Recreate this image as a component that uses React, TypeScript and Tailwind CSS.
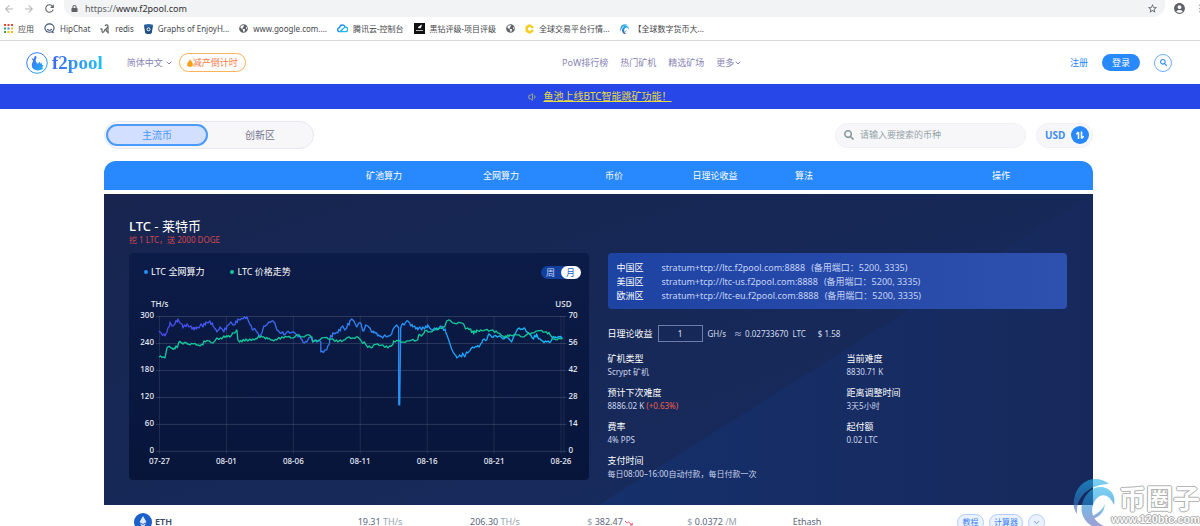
import React from 'react';
import { ChevronDown, Volume1 } from 'lucide-react';
import { FaGlobeAmericas, FaLock, FaSearch } from 'react-icons/fa';
import { MdAccountCircle, MdArrowBack, MdArrowForward, MdMoreVert, MdRefresh, MdStarBorder } from 'react-icons/md';

const APP_COLORS = ['#ea4335', '#ea4335', '#ea4335', '#34a853', '#4285f4', '#fbbc05', '#34a853', '#fbbc05', '#fbbc05'];

const AppsIcon = () => (
    <svg viewBox="0 0 9 9" className="size-[9px]">
        {APP_COLORS.map((color, i) => (
            <rect key={i} x={(i % 3) * 3.5} y={Math.floor(i / 3) * 3.5} width="2" height="2" fill={color} />
        ))}
    </svg>
);

const HipChatIcon = () => (
    <svg viewBox="0 0 12 12" className="size-[11px]" fill="none" stroke="#3b5072" strokeWidth="1.2">
        <path d="M8.6 9.6C3.5 11 1 8.500 1 5.500C1 3 3.200 1 6 1s5 2 5 4.500c0 1.600-.8 2.900-1.800 3.600l1 1.700z" />
        <path d="M3.500 6.600c1.300 1.700 3.700 1.700 5 0" />
    </svg>
);

const RedisIcon = () => (
    <svg viewBox="0 0 10 10" className="size-[10px]" fill="none" stroke="#5f6368" strokeWidth="1.200">
        <path d="M.5 5.500c1-1.500 1.800-.5 1.500 1S3 9 4 7.500 5 5 5.500 5M5 2c1-1.500 3-1.500 3 .2C8 3.500 6 4 6 5.800 6 8 8.500 8 8.500 9.500M8 2.500v6" />
    </svg>
);

const BucketIcon = () => (
    <svg viewBox="0 0 9 10" className="h-[10px] w-[9px]">
        <path d="M0 1.500h9L7.800 9c-1 1.300-5.600 1.300-6.600 0z" fill="#205081" />
        <ellipse cx="4.500" cy="1.500" rx="4.500" ry="1.500" fill="#2b62a0" />
        <circle cx="4.500" cy="5.300" r="1.500" fill="none" stroke="#fff" />
    </svg>
);

const CloudIcon = () => (
    <svg viewBox="0 0 12 10" className="h-[9px] w-[11px]" fill="none" strokeWidth="1.500">
        <path d="M3 8.500A2.200 2.200 0 0 1 2.800 4C3.200.3 8 .2 8.800 3.300" stroke="#1b8cf5" />
        <path d="M3 8.500h6.300a2.500 2.500 0 0 0 0-5.100C7 3.500 5.500 7.500 3 8.500z" stroke="#22b7f2" />
    </svg>
);

const RatingIcon = () => (
    <svg viewBox="0 0 11 11" className="size-[11px]">
        <path d="M0 0h11v11H0z" fill="#111" />
        <path d="M4 4.500 7.500 2 6.500 5zM2 7.500h7" stroke="#fff" strokeWidth=".7" fill="#fff" />
    </svg>
);

const CoinIcon = () => (
    <svg viewBox="0 0 9 10" className="h-[10px] w-[9px]">
        <path d="M4.500 0 8.500 2.500v1.500L7 4.500 4.800 3 3 4v2l1.800 1L7 5.500l1.500.5v1.500L4.500 10 .5 7.500v-5z" fill="#f8cd27" />
    </svg>
);

const SwirlIcon = ({ className }: { className: string }) => (
    <svg viewBox="0 0 42 48" className={className}>
        <defs>
            <linearGradient id="swirl" x1="0" y1="0" x2="0" y2="1">
                <stop offset="0" stopColor="#20b4ee" />
                <stop offset=".55" stopColor="#2585d0" />
                <stop offset="1" stopColor="#5b62b4" />
            </linearGradient>
        </defs>
        <path d="M36 6C24-4 4 1 1 22c-1 6 0 10 3 14C3 20 14 7 36 6z" fill="url(#swirl)" />
        <path d="M41 27C45 10 25 3 15 15 4 27 8 42 19 48h12c-9-4-14-12-11-21 4-12 15-14 21 0z" fill="url(#swirl)" />
        <path d="M17 39c6-2 12-6 15-13-1 9-6 13-13 15z" fill="url(#swirl)" />
    </svg>
);

const FishLogo = () => (
    <svg viewBox="0 0 22 22" className="size-[22px]">
        <defs>
            <linearGradient id="fish" x1="0" y1="0" x2="1" y2="1">
                <stop offset="0" stopColor="#3c6cf0" />
                <stop offset="1" stopColor="#27b1fa" />
            </linearGradient>
        </defs>
        <circle cx="11" cy="11" r="10.300" fill="none" stroke="url(#fish)" strokeWidth="1" />
        <path
            d="M5.500 6.200 7.800 7l.7-2.500 1.600-.7.400 2.200-.8 1.500c-.3 2 .8 3.600 2.300 4.200l1.500-2.200.8 2.300 1.200-1.300.6 2.200 1.300.5-1 1.600.5 2.200c-3.200 2-8 1.800-10-.4-1.600-1.900-1.400-5 .2-7.500z"
            fill="url(#fish)"
        />
    </svg>
);

const bookmarks = [
    { icon: <AppsIcon />, label: '应用' },
    { icon: <HipChatIcon />, label: 'HipChat' },
    { icon: <RedisIcon />, label: 'redis' },
    { icon: <BucketIcon />, label: 'Graphs of EnjoyH...' },
    { icon: <FaGlobeAmericas className="size-[9px] text-[#5f6368]" />, label: 'www.google.com....' },
    { icon: <CloudIcon />, label: '腾讯云-控制台' },
    { icon: <RatingIcon />, label: '黑钻评级-项目评级' },
    { icon: <FaGlobeAmericas className="size-[9px] text-[#5f6368]" />, label: '' },
    { icon: <CoinIcon />, label: '全球交易平台行情...' },
    { icon: <SwirlIcon className="h-[10px] w-[9px]" />, label: '【全球数字货币大...' },
];

const BrowserBar = () => (
    <div className="border-b border-[#d5d7da] text-[#5f6368]">
        <div className="flex h-[17px] items-center pl-[3px]">
            <MdArrowBack className="mr-2 size-3 text-[#b4b6b9]" />
            <MdArrowForward className="mr-2 size-3 text-[#b4b6b9]" />
            <MdRefresh className="mr-2 size-[13px]" />
            <div className="flex h-full flex-1 items-center rounded-b-xl bg-[#f1f3f4] px-[7px]">
                <FaLock className="mr-[7px] size-[7px]" />
                <span className="flex-1 text-[9px] leading-none">
                    https://<span className="text-[#303134]">www.f2pool.com</span>
                </span>
                <MdStarBorder className="size-[11px]" />
            </div>
            <MdAccountCircle className="ml-2 size-[13px]" />
            <MdMoreVert className="ml-2 -mr-[7px] size-[13px]" />
        </div>
        <div className="flex h-[23px] items-center gap-[10px] pl-1 text-[8px] text-[#45484c]">
            {bookmarks.map((item, i) => (
                <a key={i} href="#" className="flex items-center gap-[5px] whitespace-nowrap">
                    {item.icon}
                    {item.label}
                </a>
            ))}
        </div>
    </div>
);

const Header = () => (
    <header className="flex h-[43px] items-center pr-7 pl-[26px] text-[9px] text-[#8784b4]">
        <div className="flex w-[536px] items-center">
            <a href="#" className="flex items-center gap-1">
                <FishLogo />
                <span className="bg-linear-to-r from-[#3b66f0] to-[#1cc2fb] bg-clip-text font-['Liberation_Serif',serif] text-[19px] leading-5 font-bold text-transparent">
                    f2pool
                </span>
            </a>
            <button className="ml-6 flex items-center gap-0.5">
                简体中文
                <ChevronDown className="size-2" strokeWidth={3} />
            </button>
            <a href="#" className="ml-1.5 flex h-[19px] items-center rounded-full border border-[#fbb25c] px-[7px] text-[#fb7a45]">
                <svg viewBox="0 0 6 8" className="h-2 w-1.5">
                    <path d="M3 0c.3 1.800 2.900 2.800 2.900 5.200C5.900 7 4.600 8 3 8S.1 7 .1 5.200C.1 3.500 2.200 2.500 3 0z" fill="#f9a01b" />
                </svg>
                减产倒计时
            </a>
        </div>
        <nav className="flex items-center gap-3">
            <a href="#">PoW排行榜</a>
            <a href="#">热门矿机</a>
            <a href="#">精选矿场</a>
            <a href="#" className="flex items-center">
                更多
                <ChevronDown className="size-2" strokeWidth={3} />
            </a>
        </nav>
        <div className="ml-auto flex items-center text-[#2a8afd]">
            <a href="#">注册</a>
            <button className="ml-[14px] h-[17px] w-[38px] rounded-full bg-[#2888fd] text-white">登录</button>
            <button aria-label="搜索" className="ml-[14px] flex size-[18px] items-center justify-center rounded-full border border-[#6aaefd]">
                <FaSearch className="size-[7px]" />
            </button>
        </div>
    </header>
);

const Toolbar = () => (
    <div className="flex h-[28px] items-center">
        <div className="flex h-full w-[210px] items-center rounded-full border border-[#e6e8f0] bg-[#f7f7fa] p-px text-[10px]">
            <button className="h-[22px] w-[102px] rounded-full border-2 border-[#4b9bfc] bg-[#d2dffe] text-[#4a96fa]">主流币</button>
            <button className="flex-1 text-[#75748c]">创新区</button>
        </div>
        <label className="ml-auto flex h-[25px] w-[191px] items-center gap-1.5 rounded-full border border-[#f0f1f5] bg-[#f7f7fa] px-2">
            <FaSearch className="size-[10px] text-[#86999c]" />
            <input
                type="text"
                aria-label="搜索币种"
                placeholder="请输入要搜索的币种"
                className="min-w-0 flex-1 text-[9px] outline-none placeholder:text-[#93a3a8]"
            />
        </label>
        <button className="ml-[10px] flex h-[25px] w-[57px] items-center justify-between rounded-full border border-[#f0f1f5] bg-[#f7f7fa] pr-[3px] pl-2 text-[10px] font-bold text-[#3f8df8]">
            USD
            <svg viewBox="0 0 18 18" className="size-[18px]">
                <circle cx="9" cy="9" r="9" fill="#2888fd" />
                <path d="M7.500 13V6.300M5.300 8.200l2.200-2.200M10.500 5.500v7M12.700 10.300l-2.200 2.200" stroke="#fff" strokeWidth="1.600" fill="none" />
            </svg>
        </button>
    </div>
);

type Point = [number, number];

const hashrate: Point[] = [
    [30, 41], [32, 43], [36, 46], [38, 42], [41, 32], [43, 36], [46, 34], [49, 29], [51, 33], [53, 34], [54, 38], [58, 34],
    [60, 37], [62, 36], [65, 40], [68, 37], [70, 38], [72, 34], [74, 37], [77, 32], [79, 33], [81, 31], [84, 36], [88, 42],
    [91, 37], [93, 39], [95, 42], [98, 36], [102, 32], [104, 35], [106, 35], [109, 29], [114, 29], [118, 27], [120, 32],
    [123, 39], [126, 39], [130, 46], [133, 43], [135, 36], [138, 35], [140, 32], [144, 31], [146, 33], [148, 40], [151, 43],
    [154, 42], [155, 45], [158, 42], [162, 43], [164, 42], [168, 45], [171, 47], [174, 52], [178, 52], [180, 48], [182, 47],
    [184, 52], [186, 50], [188, 52], [190, 50], [192, 52], [192, 62], [195, 62], [196, 60], [198, 60], [201, 50], [204, 43],
    [209, 43], [212, 38], [214, 36], [216, 40], [218, 38], [221, 31], [223, 29], [226, 33], [228, 37], [230, 33], [232, 33],
    [234, 41], [235, 41], [237, 35], [239, 36], [242, 40], [245, 43], [248, 43], [249, 46], [252, 46], [254, 48], [256, 45],
    [258, 47], [260, 46], [263, 44], [264, 40], [266, 37], [268, 35], [270, 38], [270, 115], [271, 115], [272, 38], [273, 35],
    [276, 34], [278, 31], [281, 33], [284, 37], [286, 36], [289, 40], [291, 37], [293, 40], [294, 37], [296, 39], [299, 35],
    [301, 38], [303, 40], [306, 38], [308, 40], [311, 37], [314, 37], [317, 42], [319, 47], [321, 53], [323, 59], [325, 63],
    [328, 68], [331, 65], [333, 67], [334, 63], [336, 67], [338, 62], [339, 63], [342, 59], [344, 57], [348, 57], [351, 56],
    [354, 50], [358, 50], [360, 44], [363, 47], [366, 46], [369, 47], [371, 46], [374, 49], [378, 47], [383, 52], [385, 47],
    [387, 43], [389, 39], [393, 39], [396, 38], [398, 42], [400, 43], [403, 47], [405, 49], [408, 44], [410, 49], [414, 51],
    [418, 52], [422, 52], [424, 48], [427, 47], [431, 47], [434, 48],
];

const price: Point[] = [
    [30, 67], [34, 67], [36, 68], [38, 58], [39, 57], [43, 58], [46, 59], [49, 55], [50, 52], [53, 53], [56, 53], [59, 54],
    [64, 54], [69, 55], [74, 55], [75, 51], [79, 51], [83, 53], [86, 51], [88, 48], [93, 49], [95, 46], [98, 47], [102, 46],
    [104, 43], [106, 43], [108, 40], [109, 50], [113, 52], [117, 49], [119, 51], [124, 49], [128, 49], [130, 46], [133, 47],
    [135, 47], [139, 49], [143, 50], [148, 50], [153, 47], [158, 47], [164, 48], [168, 45], [173, 47], [179, 45], [183, 47],
    [184, 52], [191, 50], [193, 48], [204, 49], [209, 52], [215, 50], [218, 48], [224, 48], [229, 47], [233, 52], [236, 53],
    [238, 56], [241, 57], [243, 58], [245, 55], [254, 55], [259, 58], [261, 56], [264, 55], [265, 51], [269, 51], [273, 52],
    [281, 51], [289, 50], [290, 45], [293, 46], [296, 41], [301, 42], [306, 40], [311, 38], [316, 37], [318, 31], [320, 30],
    [324, 33], [333, 33], [335, 34], [337, 39], [342, 39], [345, 44], [348, 40], [354, 41], [364, 40], [369, 43], [374, 46],
    [378, 47], [381, 45], [388, 45], [394, 47], [398, 45], [403, 43], [409, 41], [418, 42], [421, 44], [424, 49], [434, 49],
];

const toPoints = (data: Point[]) =>
    data
        .map(([x, y], i) => {
            const next = data[i + 1];
            if (!next || next[0] - x < 3) return `${x},${y}`;
            const bump = i % 2 ? 1 : -1;
            const mx = (x + next[0]) / 2;
            const my = (y + next[1]) / 2;
            return `${x},${y} ${mx - 0.5},${my + bump} ${mx + 1},${my - bump * 0.6}`;
        })
        .join(' ');

const leftTicks = ['300', '240', '180', '120', '60', '0'];
const rightTicks = ['70', '56', '42', '28', '14', '0'];
const dates = ['07-27', '08-01', '08-06', '08-11', '08-16', '08-21', '08-26'];

const Chart = () => (
    <svg viewBox="0 0 460 190" className="block w-full" fontSize="8" fontWeight="500" fill="#e8ebf5">
        <defs>
            <linearGradient id="hash-line" gradientUnits="userSpaceOnUse" x1="30" y1="0" x2="434" y2="0">
                <stop offset="0" stopColor="#4a48ee" />
                <stop offset="1" stopColor="#12c2fa" />
            </linearGradient>
        </defs>
        <text x="22" y="17">TH/s</text>
        <text x="443" y="17" textAnchor="end">USD</text>
        {leftTicks.map((tick, i) => (
            <g key={i}>
                <path d={`M27 ${26.500 + i * 27}H438`} stroke="#fff" strokeOpacity=".15" />
                <text x="25" y={28 + i * 27} textAnchor="end">{tick}</text>
                <text x="440" y={28 + i * 27}>{rightTicks[i]}</text>
            </g>
        ))}
        {dates.map((date, i) => (
            <g key={date}>
                <path d={`M${30.500 + i * 67} 26V164`} stroke="#fff" strokeOpacity=".1" />
                <text x={30.500 + i * 67} y="174" textAnchor="middle">{date}</text>
            </g>
        ))}
        <path d="M435.500 26V164" stroke="#fff" strokeOpacity=".1" />
        <polyline points={toPoints(hashrate)} fill="none" stroke="url(#hash-line)" strokeWidth="1.300" strokeLinejoin="round" />
        <polyline points={toPoints(price)} fill="none" stroke="#12c99b" strokeWidth="1.300" strokeLinejoin="round" />
    </svg>
);

const ChartCard = () => (
    <div className="rounded bg-linear-to-b from-[#0c1c48] to-[#07153a]">
        <div className="flex h-[37px] items-center pt-px pr-2 pl-[15px] text-[9px]">
            <span className="flex items-center gap-[3px]">
                <i className="size-1 rounded-full bg-[#2592f8]" />
                LTC 全网算力
            </span>
            <span className="ml-[26px] flex items-center gap-[3px]">
                <i className="size-1 rounded-full bg-[#12c99b]" />
                LTC 价格走势
            </span>
            <div className="ml-auto flex h-[13px] w-10 rounded-full bg-[#123f9e] text-[9px] leading-[13px]">
                <button className="flex-1 text-[#c9d5f5]">周</button>
                <button className="flex-1 rounded-full bg-white text-[#2b62c4]">月</button>
            </div>
        </div>
        <Chart />
    </div>
);

const servers = [
    { region: '中国区', url: 'stratum+tcp://ltc.f2pool.com:8888' },
    { region: '美国区', url: 'stratum+tcp://ltc-us.f2pool.com:8888' },
    { region: '欧洲区', url: 'stratum+tcp://ltc-eu.f2pool.com:8888' },
];

const facts = [
    { label: '矿机类型', value: 'Scrypt 矿机' },
    { label: '当前难度', value: '8830.71 K' },
    { label: '预计下次难度', value: '8886.02 K', change: '(+0.63%)' },
    { label: '距离调整时间', value: '3天5小时' },
    { label: '费率', value: '4% PPS' },
    { label: '起付额', value: '0.02 LTC' },
    { label: '支付时间', value: '每日08:00–16:00自动付款，每日付款一次' },
];

const CoinInfo = () => (
    <div>
        <div className="rounded bg-linear-to-r from-[#1d43a3] to-[#2e50ae] px-[9px] pt-2 pb-1.5 text-[9px] leading-[14px] text-[#c5d3f8]">
            {servers.map((server) => (
                <p key={server.region} className="flex">
                    <span className="w-[45px] text-white">{server.region}</span>
                    <span>{server.url}</span>
                    <span className="ml-1.5">(备用端口：5200, 3335)</span>
                </p>
            ))}
        </div>
        <div className="mt-4 flex items-center text-[8px] text-[#d5dcf0]">
            <label htmlFor="amount" className="text-[9px] text-white">日理论收益</label>
            <input
                id="amount"
                type="text"
                defaultValue="1"
                className="mx-[5px] h-[17px] w-[45px] border border-[#6f7bab] text-center text-[9px] outline-none"
            />
            <span>GH/s</span>
            <span className="ml-2">≈</span>
            <span className="ml-[3px]">0.02733670</span>
            <span className="ml-1">LTC</span>
            <span className="ml-3">$ 1.58</span>
        </div>
        <dl className="mt-[10px] grid grid-cols-[239px_1fr] gap-y-2">
            {facts.map((fact) => (
                <div key={fact.label}>
                    <dt className="text-[9px] leading-[14px] text-white">{fact.label}</dt>
                    <dd className="text-[8px] leading-3 whitespace-nowrap text-[#cdd6ee]">
                        {fact.value} {fact.change && <span className="text-[#ee5f4f]">{fact.change}</span>}
                    </dd>
                </div>
            ))}
        </dl>
    </div>
);

const CoinDetail = () => (
    <div className="relative bg-linear-to-br from-[#17254f] to-[#162c60] pt-6 pr-[26px] pb-[25px] pl-[25px] text-left font-normal text-white">
        <div className="absolute inset-0 bg-linear-to-r from-[#15306b] from-50% to-[#17295c] [clip-path:polygon(100%_0,100%_100%,50%_100%)]" />
        <div className="relative">
            <h2 className="text-[13px] leading-4"><span className="font-medium">LTC</span> - 莱特币</h2>
            <p className="mb-2 text-[8px] leading-[11px] text-[#d6454f]">挖 1 LTC，送 2000 DOGE</p>
            <div className="grid grid-cols-2 gap-[19px]">
                <ChartCard />
                <CoinInfo />
            </div>
        </div>
    </div>
);

const CoinTable = () => (
    <table className="mt-3 w-full table-fixed border-separate border-spacing-0 text-center text-[9px]">
        <colgroup>
            <col className="w-[221px]" />
            <col className="w-[118px]" />
            <col className="w-[116px]" />
            <col className="w-[110px]" />
            <col className="w-[92px]" />
            <col className="w-[86px]" />
            <col />
        </colgroup>
        <thead>
            <tr className="h-[29px] text-white [&>th]:bg-[#2888fd] [&>th]:font-normal">
                <th className="rounded-tl-xl" />
                <th>矿池算力</th>
                <th>全网算力</th>
                <th>币价</th>
                <th>日理论收益</th>
                <th>算法</th>
                <th className="rounded-tr-xl pl-[62px]">操作</th>
            </tr>
        </thead>
        <tbody>
            <tr>
                <td colSpan={7} className="pt-1">
                    <CoinDetail />
                </td>
            </tr>
            <tr className="h-[34px] text-[#5c6780]">
                <td>
                    <span className="flex items-center gap-[3px] pl-[30px] font-semibold text-[#3c4761]">
                        <svg viewBox="0 0 18 18" className="size-[18px]">
                            <circle cx="9" cy="9" r="9" fill="#1d5fc8" />
                            <path d="M9 3l3.500 6L9 11 5.500 9zM5.800 10.200 9 12.100l3.200-1.900L9 15z" fill="#fff" fillOpacity=".85" />
                        </svg>
                        ETH
                    </span>
                </td>
                <td className="pr-2">19.31 <span className="text-[#95a3ad]">TH/s</span></td>
                <td className="pr-3">206.30 <span className="text-[#95a3ad]">TH/s</span></td>
                <td className="pr-2">
                    <span className="text-[#95a3ad]">$</span> 382.47
                    <svg viewBox="0 0 8 6" className="ml-0.5 inline h-1.5 w-2" fill="none" stroke="#f0506a">
                        <path d="M0 1l2.200 2 1.300-1 3.500 3M7.200 2.800V5H5" />
                    </svg>
                </td>
                <td className="pr-1.5"><span className="text-[#95a3ad]">$</span> 0.0372 <span className="text-[#95a3ad]">/M</span></td>
                <td className="pl-1.5">Ethash</td>
                <td className="pl-[62px]">
                    <div className="flex justify-center gap-[5px] text-[8px] text-[#3d82f5] [&>button]:h-[17px] [&>button]:rounded-full [&>button]:border [&>button]:border-[#b4cdfc] [&>button]:bg-[#eaf1ff]">
                        <button className="w-[27px]">教程</button>
                        <button className="w-[34px]">计算器</button>
                        <button aria-label="展开" className="flex w-[17px] items-center justify-center">
                            <ChevronDown className="size-[9px]" />
                        </button>
                    </div>
                </td>
            </tr>
        </tbody>
    </table>
);

const Watermark = () => (
    <div className="absolute right-0 bottom-0 flex items-end">
        <SwirlIcon className="-mr-1 h-12 w-[42px] opacity-60" />
        <div className="text-right text-white">
            <p className="text-[27px] leading-[27px] font-bold [text-shadow:0_0_1px_#888,1px_0_0_#bbb,-1px_0_0_#bbb,0_1px_0_#bbb,0_-1px_0_#bbb]">币圈子</p>
            <p className="font-['Liberation_Sans',sans-serif] text-[11px] leading-[14px] font-bold [text-shadow:0_0_1px_#777,1px_0_0_#bbb,-1px_0_0_#bbb,0_1px_0_#bbb,0_-1px_0_#bbb]">
                www.120btc.com
            </p>
        </div>
    </div>
);

export default function App() {
    return (
        <div className="relative h-screen overflow-hidden bg-white font-['Noto_Sans','Noto_Sans_CJK_SC',sans-serif]">
            <BrowserBar />
            <Header />
            <div className="flex h-[25px] items-center justify-center gap-[5px] bg-[#2747e8] text-[10px] text-[#e6dc3c]">
                <Volume1 className="size-[10px] text-[#b9c26a]" />
                <a href="#" className="underline">鱼池上线BTC智能跳矿功能！</a>
            </div>
            <main className="pt-3 pr-[107px] pl-[104px]">
                <Toolbar />
                <CoinTable />
            </main>
            <Watermark />
        </div>
    );
}
